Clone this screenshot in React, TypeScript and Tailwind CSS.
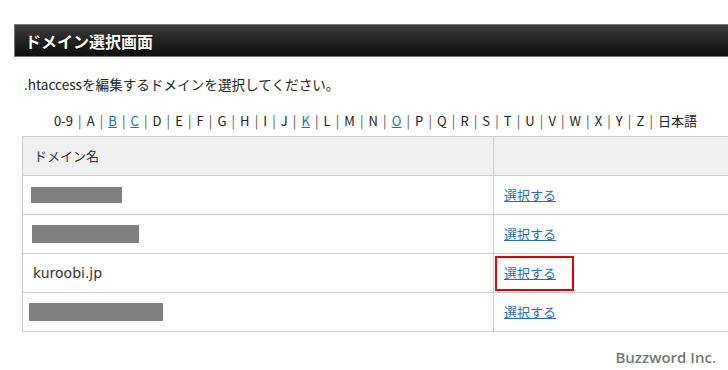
const letters = ['0-9', 'A', 'B', 'C', 'D', 'E', 'F', 'G', 'H', 'I', 'J', 'K', 'L', 'M', 'N', 'O', 'P', 'Q', 'R', 'S', 'T', 'U', 'V', 'W', 'X', 'Y', 'Z', '日本語']
const linked = ['B', 'C', 'K', 'O']

const rows = [
    { name: '', bar: 'ml-[8px] w-[91px] h-[16px]' },
    { name: '', bar: 'ml-[9px] w-[107px] h-[18px]' },
    { name: 'kuroobi.jp', bar: '', picked: true },
    { name: '', bar: 'ml-[6px] w-[134px] h-[18px]' },
]

const App = () => {
    return (
        <div className="w-[728px] h-[370px] overflow-hidden bg-white text-[#333] font-['DejaVu_Sans','Noto_Sans_CJK_JP',sans-serif]">
            <div className="w-[760px] pl-[14px] pt-[24px]">
                <div className="h-[33px] border border-[#777] bg-gradient-to-b from-[#3c3c3c] to-[#0e0e0e] flex items-center pl-[10px]">
                    <h1 className="text-white text-[16px] font-bold font-['Noto_Sans_CJK_JP',sans-serif] [text-shadow:0_1px_1px_#000]">ドメイン選択画面</h1>
                </div>

                <p className="mt-[17px] pl-[10px] text-[13.6px] leading-[20px] text-[#222] font-['Noto_Sans_CJK_JP',sans-serif]">.htaccessを編集するドメインを選択してください。</p>

                <div className="mt-[18px] pl-[40px] flex items-center text-[13px] leading-[18px] text-[#222] font-['Noto_Sans_CJK_JP',sans-serif]">
                    {letters.map((l, i) => (
                        <span key={l} className="flex items-center">
                            {linked.includes(l)
                                ? <a href="#" className="text-[#2a6ab0] underline">{l}</a>
                                : <span>{l}</span>}
                            {i < letters.length - 1 && <span className="mx-[5.1px] text-[#555]">|</span>}
                        </span>
                    ))}
                </div>

                <table className="mt-[6px] ml-[8px] w-[740px] border-collapse text-[13px] font-['Noto_Sans_CJK_JP',sans-serif]">
                    <thead>
                        <tr className="bg-[#f0f0f0] h-[39px]">
                            <th className="border border-[#ccc] text-left font-normal pl-[11px] w-[471px]">ドメイン名</th>
                            <th className="border border-[#ccc]"></th>
                        </tr>
                    </thead>
                    <tbody>
                        {rows.map((r, i) => (
                            <tr key={i} className="h-[39px]">
                                <td className="border border-[#ccc] p-0">
                                    {r.name
                                        ? <span className="pl-[10px] text-[14px] text-[#333] font-['DejaVu_Sans',sans-serif]">{r.name}</span>
                                        : <div className={`bg-[#808080] ${r.bar}`}></div>}
                                </td>
                                <td className="border border-[#ccc] p-0 pl-[1px]">
                                    {r.picked
                                        ? <div className="w-[79px] h-[35px] border-2 border-[#e00000] flex items-center pl-[7px]">
                                            <a href="#" className="text-[#2a6ab0] underline">選択する</a>
                                        </div>
                                        : <a href="#" className="ml-[9px] text-[#2a6ab0] underline">選択する</a>}
                                </td>
                            </tr>
                        ))}
                    </tbody>
                </table>
            </div>
            <div className="w-[728px] flex justify-end pr-[12px] mt-[14px]">
                <span className="text-[15px] font-semibold text-[#777] font-['Open_Sans',sans-serif]">Buzzword Inc.</span>
            </div>
        </div>
    )
}

export default App
